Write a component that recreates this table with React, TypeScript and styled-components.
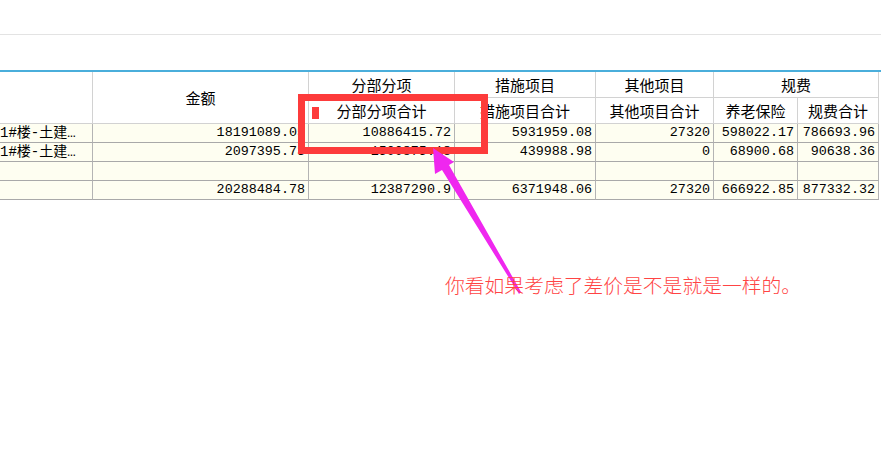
import React from "react";
import styled, { createGlobalStyle } from "styled-components";

const Global = createGlobalStyle`
  html, body { margin: 0; padding: 0; background: #ffffff; }
  body { width: 881px; height: 458px; overflow: hidden; font-family: "Noto Sans CJK SC", "Noto Sans", sans-serif; color: #000; }
`;

const Page = styled.div`
  position: relative;
  width: 881px;
  height: 458px;
  display: flex;
  flex-direction: column;
`;

const TopBar = styled.div`
  height: 34px;
  border-bottom: 1px solid #e3e3e3;
  flex: none;
`;

const Spacer = styled.div`
  height: 35px;
  flex: none;
`;

const TableFrame = styled.div`
  border-top: 2px solid #4aaedb;
  flex: none;
`;

const Grid = styled.div`
  display: grid;
  grid-template-columns: 93px 216px 146px 141px 118px 84px 81px;
  grid-template-rows: 26px 26px 19px 19px 19px 19px;
  width: 879px;
`;

const HeadCell = styled.div<{ $rows?: number; $cols?: number }>`
  box-sizing: border-box;
  grid-row: span ${(p) => p.$rows ?? 1};
  grid-column: span ${(p) => p.$cols ?? 1};
  border-right: 1px solid #d2d2d2;
  border-bottom: 1px solid #d2d2d2;
  background: #ffffff;
  display: flex;
  align-items: center;
  justify-content: center;
  font-size: 15px;
  line-height: 18px;
  white-space: nowrap;
  overflow: hidden;
`;

const DataCell = styled.div<{ $text?: boolean }>`
  box-sizing: border-box;
  border-right: 1px solid #b4b4b4;
  border-bottom: 1px solid #a9a9a9;
  background: #fefef1;
  display: flex;
  align-items: center;
  justify-content: ${(p) => (p.$text ? "flex-start" : "flex-end")};
  padding: ${(p) => (p.$text ? "0" : "0 3px 0 0")};
  font-family: ${(p) =>
    p.$text
      ? '"Liberation Mono", "Noto Sans CJK SC", monospace'
      : '"Liberation Mono", monospace'};
  font-size: ${(p) => (p.$text ? "14px" : "13.4px")};
  line-height: 18px;
  white-space: nowrap;
  overflow: hidden;
`;

const HighlightBox = styled.div`
  position: absolute;
  left: 298px;
  top: 94px;
  width: 190px;
  height: 60px;
  box-sizing: border-box;
  border: 7px solid #fd3b3b;
  pointer-events: none;
`;

const Marker = styled.div`
  position: absolute;
  left: 312px;
  top: 107px;
  width: 7px;
  height: 12px;
  background: #fd3b3b;
`;

const Note = styled.div`
  position: absolute;
  left: 445px;
  top: 272px;
  font-family: "Noto Sans CJK SC", sans-serif;
  font-size: 19.8px;
  line-height: 26px;
  font-weight: 300;
  color: #ff4444;
  white-space: nowrap;
`;

const ArrowLayer = styled.svg`
  position: absolute;
  left: 0;
  top: 0;
  width: 881px;
  height: 458px;
  pointer-events: none;
`;

type Row = string[];

const rows: Row[] = [
  ["1#楼-土建…", "18191089.05", "10886415.72", "5931959.08", "27320", "598022.17", "786693.96"],
  ["1#楼-土建…", "2097395.73", "1500875.18", "439988.98", "0", "68900.68", "90638.36"],
  ["", "", "", "", "", "", ""],
  ["", "20288484.78", "12387290.9", "6371948.06", "27320", "666922.85", "877332.32"],
];

export default function App() {
  return (
    <>
      <Global />
      <Page>
        <TopBar />
        <Spacer />
        <TableFrame>
          <Grid>
            <HeadCell $rows={2} />
            <HeadCell $rows={2}>金额</HeadCell>
            <HeadCell>分部分项</HeadCell>
            <HeadCell>措施项目</HeadCell>
            <HeadCell>其他项目</HeadCell>
            <HeadCell $cols={2}>规费</HeadCell>
            <HeadCell>分部分项合计</HeadCell>
            <HeadCell>措施项目合计</HeadCell>
            <HeadCell>其他项目合计</HeadCell>
            <HeadCell>养老保险</HeadCell>
            <HeadCell>规费合计</HeadCell>
            {rows.map((r, i) =>
              r.map((v, j) => (
                <DataCell key={`${i}-${j}`} $text={j === 0}>
                  {v}
                </DataCell>
              ))
            )}
          </Grid>
        </TableFrame>
        <HighlightBox />
        <Marker />
        <ArrowLayer viewBox="0 0 881 458">
          <polygon
            points="433,148 454,162 449,165 521,292 519,294 442,170 435,174"
            fill="#ef27ef"
          />
        </ArrowLayer>
        <Note>你看如果考虑了差价是不是就是一样的。</Note>
      </Page>
    </>
  );
}
